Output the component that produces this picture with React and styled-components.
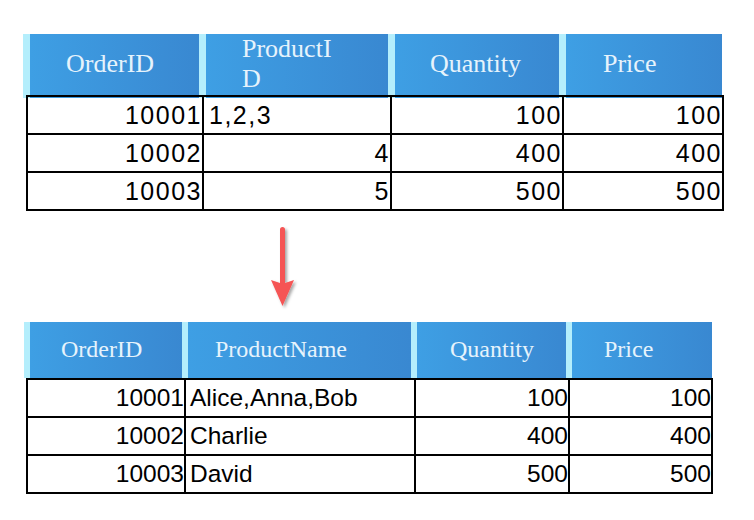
import React from "react";
import styled, { createGlobalStyle } from "styled-components";

const GlobalStyle = createGlobalStyle`
  body {
    margin: 0;
    background: #ffffff;
  }
`;

const topColumns = [
  { label: "OrderID", head: 176, body: 174, pad: 36 },
  { label: "ProductID", head: 189, body: 188, pad: 36 },
  { label: "Quantity", head: 171, body: 172, pad: 35 },
  { label: "Price", head: 163, body: 160, pad: 37 },
];

const topRows = [
  [10001, "1,2,3", 100, 100],
  [10002, 4, 400, 400],
  [10003, 5, 500, 500],
];

const bottomColumns = [
  { label: "OrderID", head: 158, body: 156, pad: 31 },
  { label: "ProductName", head: 229, body: 230, pad: 27 },
  { label: "Quantity", head: 155, body: 154, pad: 33 },
  { label: "Price", head: 146, body: 143, pad: 32 },
];

const bottomRows = [
  [10001, "Alice,Anna,Bob", 100, 100],
  [10002, "Charlie", 400, 400],
  [10003, "David", 500, 500],
];

const Page = styled.div`
  width: 754px;
  height: 520px;
  padding-top: 34px;
  box-sizing: border-box;
  display: flex;
  flex-direction: column;
  align-items: flex-start;
`;

const TableWrap = styled.div`
  margin-left: 26px;
  display: flex;
  flex-direction: column;
  align-items: flex-start;
`;

const HeadRow = styled.div`
  display: grid;
  grid-template-columns: ${(p) => p.cols};
  height: ${(p) => p.h}px;
  margin-left: -${(p) => p.offset}px;
`;

const HeadCell = styled.div`
  box-sizing: border-box;
  border-left: ${(p) => p.stripe}px solid #b4eefc;
  background: linear-gradient(to right, #3e9fe4, #3988d1);
  color: #e6f3fc;
  font-family: "Liberation Serif", "Times New Roman", serif;
  font-size: ${(p) => p.fs}px;
  line-height: 30px;
  padding-left: ${(p) => p.pad}px;
  padding-bottom: ${(p) => p.lift}px;
  display: flex;
  align-items: center;
`;

const HeadLabel = styled.span`
  max-width: ${(p) => (p.max ? p.max + "px" : "none")};
  word-break: break-all;
`;

const Body = styled.div`
  border: 2px solid #000;
  display: flex;
  flex-direction: column;
`;

const Row = styled.div`
  display: grid;
  grid-template-columns: ${(p) => p.cols};
  border-top: ${(p) => (p.first ? "none" : "2px solid #000")};
`;

const Cell = styled.div`
  box-sizing: border-box;
  height: 36px;
  border-left: ${(p) => (p.first ? "none" : "2px solid #000")};
  display: flex;
  align-items: center;
  justify-content: ${(p) => (p.right ? "flex-end" : "flex-start")};
  padding-left: ${(p) => (p.right ? 0 : p.indent)}px;
  font-family: "Liberation Sans", Arial, sans-serif;
  font-size: ${(p) => p.fs}px;
  letter-spacing: ${(p) => p.spacing}px;
  color: #000;
  white-space: nowrap;
`;

const ArrowBox = styled.svg`
  margin: 13px 0 12px 268px;
  display: block;
`;

function DataTable({ columns, rows, t }) {
  const headCols = columns.map((c) => c.head + "px").join(" ");
  const bodyCols = columns.map((c) => c.body + "px").join(" ");
  return (
    <TableWrap>
      <HeadRow cols={headCols} h={t.headH} offset={t.offset}>
        {columns.map((c) => (
          <HeadCell key={c.label} stripe={t.stripe} fs={t.headFs} pad={c.pad} lift={t.lift}>
            <HeadLabel max={t.labelMax}>{c.label}</HeadLabel>
          </HeadCell>
        ))}
      </HeadRow>
      <Body>
        {rows.map((r, i) => (
          <Row key={i} cols={bodyCols} first={i === 0}>
            {r.map((v, j) => (
              <Cell
                key={j}
                first={j === 0}
                right={typeof v === "number"}
                fs={t.bodyFs}
                spacing={t.spacing}
                indent={t.indent}
              >
                {v}
              </Cell>
            ))}
          </Row>
        ))}
      </Body>
    </TableWrap>
  );
}

function DownArrow() {
  return (
    <ArrowBox width="34" height="86" viewBox="0 0 34 86">
      <defs>
        <filter id="arrowShadow" x="-40%" y="-20%" width="180%" height="140%">
          <feDropShadow dx="2" dy="2" stdDeviation="1.4" floodColor="#000" floodOpacity="0.35" />
        </filter>
      </defs>
      <path
        d="M12 5.5 A2.5 2.5 0 0 1 17 5.5 L17 59 L26 56 L14.5 82 L3 56 L12 59 Z"
        fill="#f55454"
        filter="url(#arrowShadow)"
      />
    </ArrowBox>
  );
}

export default function App() {
  return (
    <>
      <GlobalStyle />
      <Page>
        <DataTable
          columns={topColumns}
          rows={topRows}
          t={{ headH: 61, offset: 3, stripe: 7, headFs: 26, lift: 4, labelMax: 100, bodyFs: 25, spacing: 1.5, indent: 5 }}
        />
        <DownArrow />
        <DataTable
          columns={bottomColumns}
          rows={bottomRows}
          t={{ headH: 56, offset: 2, stripe: 6, headFs: 24, lift: 3, bodyFs: 24.5, spacing: 0, indent: 4 }}
        />
      </Page>
    </>
  );
}
